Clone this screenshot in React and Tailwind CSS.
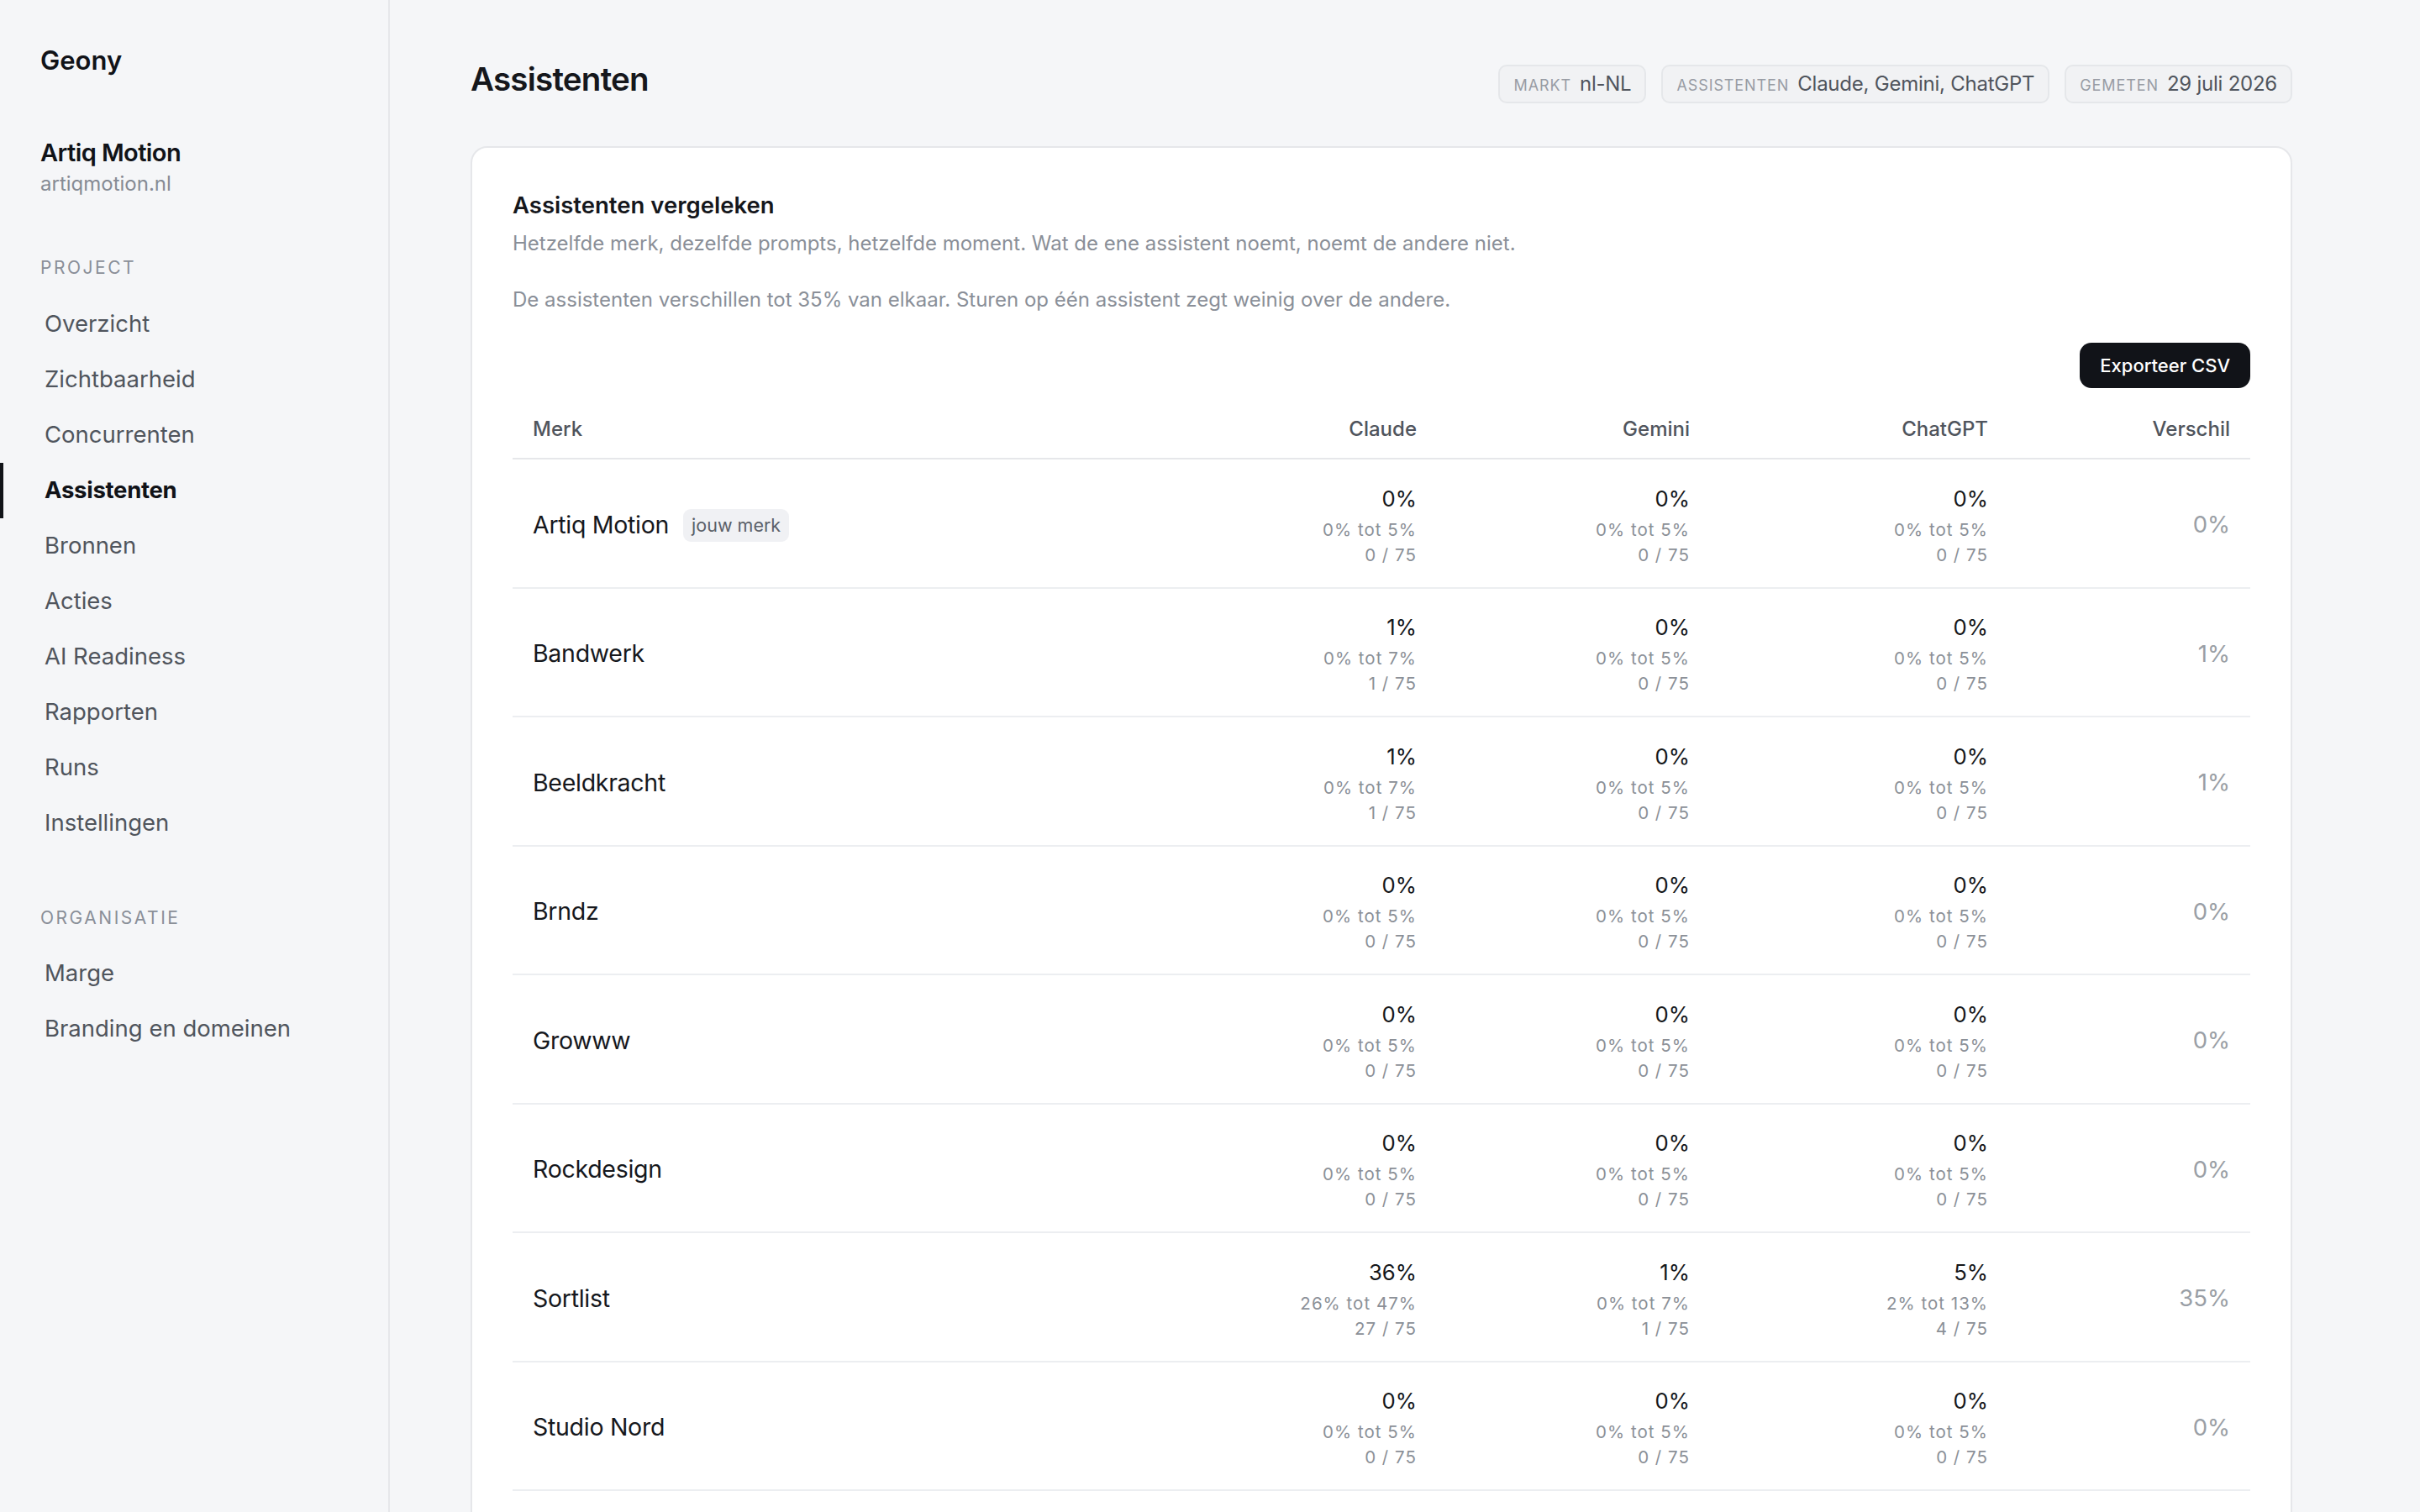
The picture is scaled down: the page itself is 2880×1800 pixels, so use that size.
import React from "react";

const projectNav = [
  "Overzicht",
  "Zichtbaarheid",
  "Concurrenten",
  "Assistenten",
  "Bronnen",
  "Acties",
  "AI Readiness",
  "Rapporten",
  "Runs",
  "Instellingen",
];
const orgNav = ["Marge", "Branding en domeinen"];

const zero = { v: "0%", r: "0% tot 5%", n: "0 / 75" };
const one = { v: "1%", r: "0% tot 7%", n: "1 / 75" };

const rows = [
  { name: "Artiq Motion", own: true, c: zero, g: zero, o: zero, d: "0%" },
  { name: "Bandwerk", c: one, g: zero, o: zero, d: "1%" },
  { name: "Beeldkracht", c: one, g: zero, o: zero, d: "1%" },
  { name: "Brndz", c: zero, g: zero, o: zero, d: "0%" },
  { name: "Growww", c: zero, g: zero, o: zero, d: "0%" },
  { name: "Rockdesign", c: zero, g: zero, o: zero, d: "0%" },
  {
    name: "Sortlist",
    c: { v: "36%", r: "26% tot 47%", n: "27 / 75" },
    g: one,
    o: { v: "5%", r: "2% tot 13%", n: "4 / 75" },
    d: "35%",
  },
  { name: "Studio Nord", c: zero, g: zero, o: zero, d: "0%" },
];

function NavItem({ label, active }) {
  return (
    <div
      className={
        "flex h-[66px] items-center border-l-4 pl-[49px] text-[27.5px] " +
        (active
          ? "border-[#111318] font-bold tracking-[-0.01em] text-[#111318]"
          : "border-transparent text-[#50555d]")
      }
    >
      {label}
    </div>
  );
}

function Chip({ label, value }) {
  return (
    <div className="inline-flex items-baseline gap-[10px] rounded-[10px] border-2 border-[#e5e7ea] bg-[#f1f2f4] px-[16px] py-[3px]">
      <span className="text-[18px] uppercase tracking-[0.05em] text-[#989ca4]">{label}</span>
      <span className="text-[24px] leading-[36px] tracking-[-0.01em] text-[#50555d]">{value}</span>
    </div>
  );
}

function Cell({ d }) {
  return (
    <div className="flex flex-col items-end px-[24px] text-right">
      <div className="text-[25.7px] leading-[38px] text-[#15171a]">{d.v}</div>
      <div className="mt-[3px] text-[20.5px] leading-[30px] tracking-[0.05em] text-[#8b9097]">{d.r}</div>
      <div className="text-[20.5px] leading-[30px] tracking-[0.05em] text-[#8b9097]">{d.n}</div>
    </div>
  );
}

export default function App() {
  return (
    <div className="flex min-h-screen bg-[#f5f6f8] font-[Inter,sans-serif]">
      <aside className="w-[464px] shrink-0 border-r-2 border-[#e6e7ea] bg-[#f5f6f8] pt-[49px]">
        <div className="px-[48px] text-[31px] font-semibold leading-[46px] text-[#111318]">Geony</div>
        <div className="mt-[69px] px-[48px] text-[29px] font-semibold leading-[36px] tracking-[-0.02em] text-[#111318]">
          Artiq Motion
        </div>
        <div className="mt-[3px] px-[48px] text-[24px] leading-[32px] text-[#868b94]">artiqmotion.nl</div>
        <div className="mt-[68px] px-[48px] text-[21px] leading-[32px] tracking-[0.12em] text-[#8a8f98]">PROJECT</div>
        <nav className="mt-[18px] flex flex-col">
          {projectNav.map((n) => (
            <NavItem key={n} label={n} active={n === "Assistenten"} />
          ))}
        </nav>
        <div className="mt-[64px] px-[48px] text-[21px] leading-[32px] tracking-[0.12em] text-[#8a8f98]">ORGANISATIE</div>
        <nav className="mt-[17px] flex flex-col">
          {orgNav.map((n) => (
            <NavItem key={n} label={n} />
          ))}
        </nav>
      </aside>

      <main className="flex-1 pl-[96px] pt-[70px]">
        <div className="w-[2168px]">
          <div className="flex items-baseline justify-between">
            <h1 className="text-[38.5px] font-semibold leading-[48px] tracking-[-0.02em] text-[#15171c]">Assistenten</h1>
            <div className="flex items-baseline gap-[18px]">
              <Chip label="Markt" value="nl-NL" />
              <Chip label="Assistenten" value="Claude, Gemini, ChatGPT" />
              <Chip label="Gemeten" value="29 juli 2026" />
            </div>
          </div>

          <section className="mt-[51px] rounded-[20px] border-2 border-[#e6e7ea] bg-white p-[48px]">
            <h2 className="text-[27.5px] font-semibold leading-[41px] text-[#15171c]">Assistenten vergeleken</h2>
            <p className="mt-[7px] text-[24px] leading-[36px] text-[#8a8f98]">
              Hetzelfde merk, dezelfde prompts, hetzelfde moment. Wat de ene assistent noemt, noemt de andere niet.
            </p>
            <p className="mt-[31px] text-[24px] leading-[36px] text-[#8a8f98]">
              De assistenten verschillen tot 35% van elkaar. Sturen op één assistent zegt weinig over de andere.
            </p>
            <div className="mt-[33px] flex justify-end">
              <button className="h-[54px] rounded-[14px] bg-[#111318] px-[24px] text-[22px] font-medium text-white">
                Exporteer CSV
              </button>
            </div>

            <div className="mt-[15px]">
              <div className="grid grid-cols-[1fr_325px_325px_355px_288px] border-b-2 border-[#e6e7ea] py-[16px] text-[24px] font-medium leading-[36px] text-[#50555d]">
                <div className="px-[24px]">Merk</div>
                <div className="px-[24px] text-right">Claude</div>
                <div className="px-[24px] text-right">Gemini</div>
                <div className="px-[24px] text-right">ChatGPT</div>
                <div className="px-[24px] text-right">Verschil</div>
              </div>
              {rows.map((r) => (
                <div
                  key={r.name}
                  className="grid grid-cols-[1fr_325px_325px_355px_288px] items-center border-b-2 border-[#eceef1] pb-[23px] pt-[27.5px]"
                >
                  <div className="flex items-center px-[24px]">
                    <span className="text-[28.5px] tracking-[-0.01em] text-[#16181d]">{r.name}</span>
                    {r.own && (
                      <span className="ml-[17px] rounded-[9px] bg-[#f0f1f4] px-[10px] py-[3px] text-[21.5px] leading-[33px] text-[#5b6068]">
                        jouw merk
                      </span>
                    )}
                  </div>
                  <Cell d={r.c} />
                  <Cell d={r.g} />
                  <Cell d={r.o} />
                  <div className="px-[24px] text-right text-[27.5px] text-[#9a9fa6]">{r.d}</div>
                </div>
              ))}
            </div>
          </section>
        </div>
      </main>
    </div>
  );
}
